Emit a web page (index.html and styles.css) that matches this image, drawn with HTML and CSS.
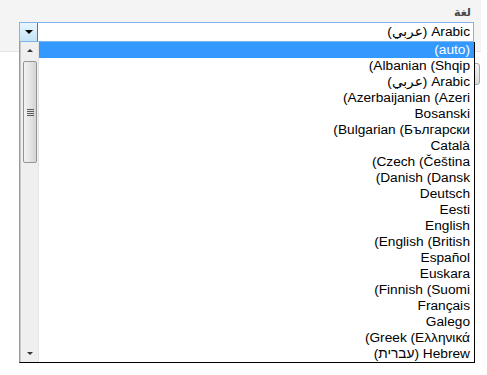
FILE: index.html
```html
<!DOCTYPE html>
<html lang="ar">
<head>
    <meta charset="UTF-8">
    <meta name="viewport" content="width=device-width, initial-scale=1.0">
    <link rel="stylesheet" href="styles.css">
</head>
<body>
    <div class="page">
        <div class="panel">
            <div class="field-label" dir="rtl">لغة</div>
            <div class="select-box">
                <div class="select-arrow"><span class="tri-down"></span></div>
                <div class="select-value" dir="rtl">Arabic (عربي)</div>
            </div>
        </div>
        <div class="below">
            <div class="side-button"></div>
        </div>
        <div class="dropdown">
            <div class="scrollbar">
                <div class="scroll-btn"><span class="tri-up"></span></div>
                <div class="thumb">
                    <div class="grip"><span></span><span></span><span></span><span></span></div>
                </div>
                <div class="track"></div>
                <div class="scroll-btn"><span class="tri-down small"></span></div>
            </div>
            <!-- items as the rtl list shows them: the closing bracket ends up on the left -->
            <ul class="options">
                <li class="selected" dir="ltr">(auto)</li>
                <li dir="ltr">(Albanian (Shqip</li>
                <li dir="rtl">Arabic (عربي)</li>
                <li dir="ltr">(Azerbaijanian (Azeri</li>
                <li dir="ltr">Bosanski</li>
                <li dir="ltr">(Bulgarian (Български</li>
                <li dir="ltr">Català</li>
                <li dir="ltr">(Czech (Čeština</li>
                <li dir="ltr">(Danish (Dansk</li>
                <li dir="ltr">Deutsch</li>
                <li dir="ltr">Eesti</li>
                <li dir="ltr">English</li>
                <li dir="ltr">(English (British</li>
                <li dir="ltr">Español</li>
                <li dir="ltr">Euskara</li>
                <li dir="ltr">(Finnish (Suomi</li>
                <li dir="ltr">Français</li>
                <li dir="ltr">Galego</li>
                <li dir="ltr">(Greek (Ελληνικά</li>
                <li dir="rtl">Hebrew (עברית)</li>
            </ul>
        </div>
    </div>
</body>
</html>
```

FILE: styles.css
```css
body {
    margin: 0;
    padding: 0;
    background-color: #ffffff;
    font-family: "Liberation Sans", Arial, "DejaVu Sans", sans-serif;
}
.page {
    position: relative;
    width: 487px;
    height: 375px;
    overflow: hidden;
}
.panel {
    width: 481px;
    height: 52px;
    background-color: #f4f4f4;
    border-bottom: 1px solid #e4e4e4;
    box-sizing: border-box;
    padding-top: 5px;
}
.field-label {
    text-align: right;
    padding-right: 10px;
    font-family: "DejaVu Sans", sans-serif;
    font-size: 11px;
    font-weight: bold;
    color: #4a4a4a;
    height: 17px;
    line-height: 15px;
}
.select-box {
    display: flex;
    margin-left: 19px;
    width: 455px;
    height: 20px;
    box-sizing: border-box;
    border: 1px solid #7eb4ea;
    background-color: #fff;
}
.select-arrow {
    width: 17px;
    display: flex;
    align-items: center;
    justify-content: center;
    background: linear-gradient(#eaf6fd, #c4e3f7);
    border-right: 1px solid #3c7fb1;
}
.select-value {
    flex: 1;
    text-align: right;
    padding-right: 3px;
    font-size: 13.7px;
    line-height: 18px;
    color: #000;
}
.tri-down {
    width: 0;
    height: 0;
    border-left: 4px solid transparent;
    border-right: 4px solid transparent;
    border-top: 4px solid #000;
}
.tri-down.small {
    border-left-width: 3px;
    border-right-width: 3px;
    border-top: 3px solid #333;
}
.tri-up {
    width: 0;
    height: 0;
    border-left: 3px solid transparent;
    border-right: 3px solid transparent;
    border-bottom: 3px solid #333;
}
.below {
    display: flex;
    justify-content: flex-end;
    padding: 11px 7px 0 0;
}
.side-button {
    width: 40px;
    height: 22px;
    box-sizing: border-box;
    border: 1px solid #a8a8a8;
    border-radius: 3px;
    background: linear-gradient(#f2f2f2, #dcdcdc);
}
.dropdown {
    position: absolute;
    top: 42px;
    left: 19px;
    width: 456px;
    height: 321px;
    box-sizing: border-box;
    display: flex;
    background-color: #fff;
    border: 1px solid #000;
    border-top: none;
    border-left: 1px solid #9a9a9a;
}
.scrollbar {
    width: 17px;
    display: flex;
    flex-direction: column;
    background-color: #efefef;
    border-left: 1px solid #c8c8c8;
    border-right: 1px solid #e4e4e4;
}
.scroll-btn {
    height: 17px;
    display: flex;
    align-items: center;
    justify-content: center;
}
.thumb {
    height: 102px;
    margin: 2px 1px 0 2px;
    box-sizing: border-box;
    border: 1px solid #959595;
    border-radius: 2px;
    background: linear-gradient(to right, #f3f3f3, #e6e6e6 45%, #d4d4d4);
    display: flex;
    align-items: center;
    justify-content: center;
}
.grip {
    display: flex;
    flex-direction: column;
    gap: 1px;
}
.grip span {
    width: 7px;
    height: 1px;
    background-color: #5a5a5a;
}
.track {
    flex: 1;
}
.options {
    flex: 1;
    list-style: none;
    margin: 0;
    padding: 0;
}
.options li {
    height: 16px;
    line-height: 16px;
    font-size: 13.7px;
    color: #000;
    text-align: right;
    padding: 0 4px;
    white-space: nowrap;
}
.options li.selected {
    background-color: #3399ff;
    color: #fff;
}
```
